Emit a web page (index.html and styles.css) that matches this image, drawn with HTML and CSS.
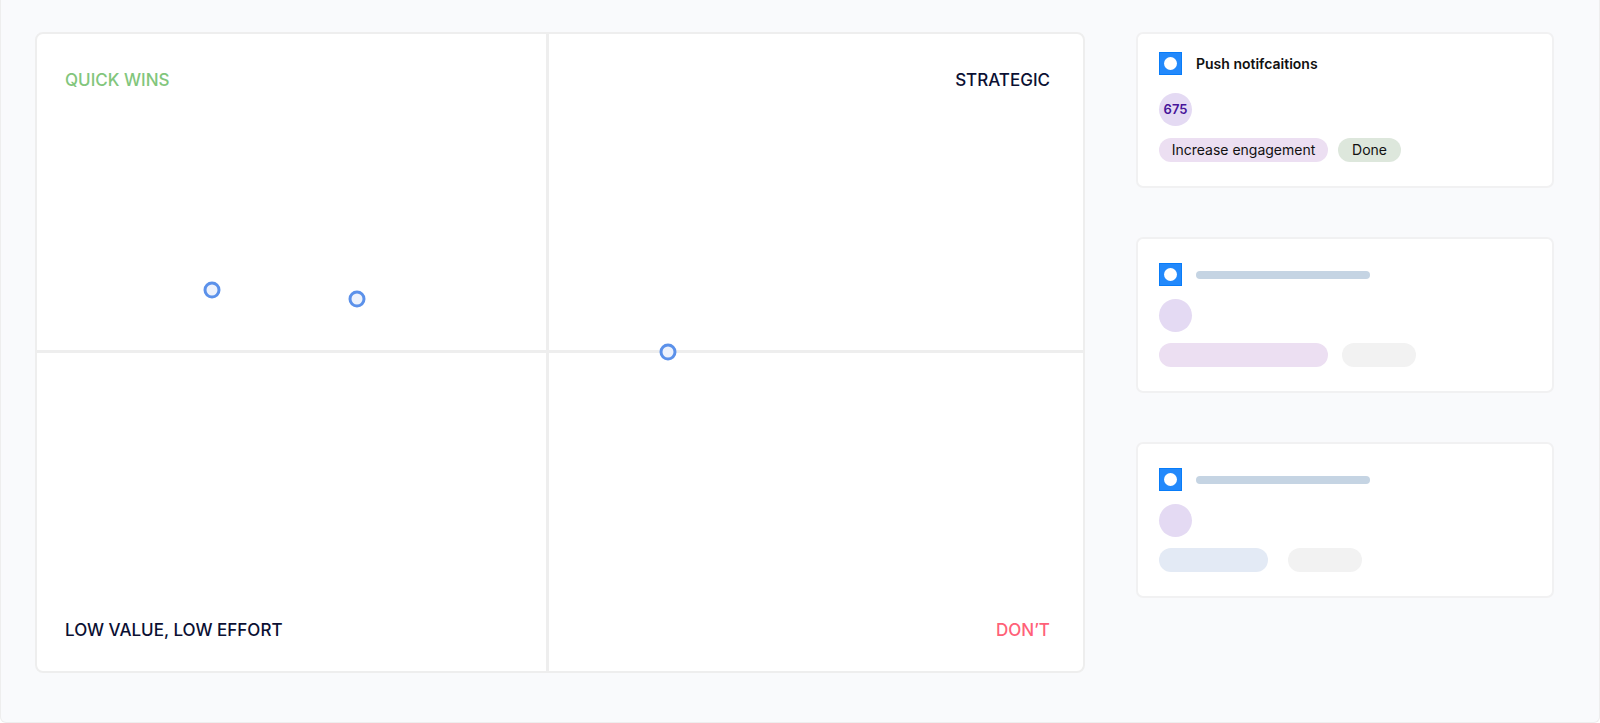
FILE: index.html
```html
<!doctype html>
<html lang="en">
  <head>
    <meta charset="utf-8">
    <title>Prioritization matrix</title>
    <link rel="stylesheet" href="styles.css">
  </head>
  <body>
    <main class="page">
      <section class="matrix">
        <div class="quadrant quick-wins">QUICK WINS</div>
        <div class="quadrant strategic">STRATEGIC</div>
        <div class="quadrant low-value">LOW VALUE, LOW EFFORT</div>
        <div class="quadrant dont">DON’T</div>
        <span class="point" style="left: 16.7%; top: 40.2%"></span>
        <span class="point" style="left: 30.6%; top: 41.6%"></span>
        <span class="point" style="left: 60.3%; top: 49.9%"></span>
      </section>

      <aside class="cards">
        <article class="card">
          <header>
            <span class="icon"></span>
            <strong>Push notifcaitions</strong>
          </header>
          <div class="score">675</div>
          <div class="tags">
            <span class="tag goal">Increase engagement</span>
            <span class="tag done">Done</span>
          </div>
        </article>

        <article class="card placeholder">
          <header>
            <span class="icon"></span>
            <span class="line"></span>
          </header>
          <div class="score"></div>
          <div class="tags">
            <span class="tag goal"></span>
            <span class="tag empty"></span>
          </div>
        </article>

        <article class="card placeholder">
          <header>
            <span class="icon"></span>
            <span class="line"></span>
          </header>
          <div class="score"></div>
          <div class="tags wide">
            <span class="tag blue"></span>
            <span class="tag empty"></span>
          </div>
        </article>
      </aside>
    </main>
  </body>
</html>
```

FILE: styles.css
```css
* {
  box-sizing: border-box;
}
body {
  margin: 0;
  background: #fff;
  color: #111;
  font-family: Inter, "Liberation Sans", sans-serif;
}
.page {
  display: grid;
  grid-template-columns: 1050fr 418fr;
  gap: 51px;
  min-height: 100vh;
  padding: 32px 45px 49px 34px;
  background: #f9fafc;
  border: 1px solid #eee;
  border-top: 0;
  border-radius: 0 0 6px 6px;
}

/* matrix */
.matrix {
  position: relative;
  display: grid;
  grid-template-columns: 512fr 533fr;
  grid-template-rows: 320fr 318fr;
  background: #fff;
  border: 2px solid #eee;
  border-radius: 8px;
}
.quadrant {
  display: flex;
  padding: 32px 33px 27px 28px;
  color: #0b1033;
  font-size: 17px;
  font-weight: 500;
  line-height: 28px;
}
.quick-wins {
  color: #82c67c;
}
.quick-wins,
.low-value {
  border-right: 3px solid #eee;
}
.quick-wins,
.strategic {
  border-bottom: 3px solid #eee;
}
.low-value,
.dont {
  align-items: flex-end;
}
.strategic,
.dont {
  justify-content: flex-end;
}
.dont {
  color: #ff6178;
}
.point {
  position: absolute;
  width: 17px;
  height: 17px;
  background: #edf2fc;
  border: 3px solid #5b91ea;
  border-radius: 50%;
  transform: translate(-50%, -50%);
}

/* cards */
.cards {
  display: flex;
  flex-direction: column;
  gap: 49px;
}
.card {
  padding: 18px 21px 24px;
  background: #fff;
  border: 2px solid #f1f1f2;
  border-radius: 7px;
}
.card header {
  display: flex;
  align-items: center;
  gap: 14px;
  height: 23px;
}
.card strong {
  font-size: 14px;
  font-weight: 600;
}
.icon {
  display: flex;
  align-items: center;
  justify-content: center;
  width: 23px;
  height: 23px;
  background: #2389fb;
  border: 1px solid #087cf9;
}
.icon::before {
  content: "";
  width: 13px;
  height: 13px;
  background: #fff;
  border-radius: 50%;
}
.line {
  width: 174px;
  height: 8px;
  background: #c5d4e3;
  border-radius: 4px;
}
.score {
  width: 33px;
  height: 33px;
  margin: 18px 0 12px;
  background: #e4daf3;
  border-radius: 50%;
  color: #46149a;
  font-size: 13px;
  font-weight: 600;
  line-height: 32px;
  text-align: center;
}
.tags {
  display: flex;
  gap: 10px;
}
.tag {
  height: 24px;
  border-radius: 12px;
  font-size: 14px;
  line-height: 24px;
  text-align: center;
}
.goal {
  width: 169px;
  background: #ecdff2;
}
.done {
  width: 63px;
  background: #dde7dc;
}
.empty {
  width: 74px;
  background: #f2f2f2;
}
.blue {
  width: 109px;
  background: #e3eaf5;
}
.placeholder {
  padding-top: 24px;
}
.placeholder .score {
  margin: 13px 0 11px;
}
.placeholder .tags {
  gap: 14px;
}
.placeholder .wide {
  gap: 20px;
}
```
